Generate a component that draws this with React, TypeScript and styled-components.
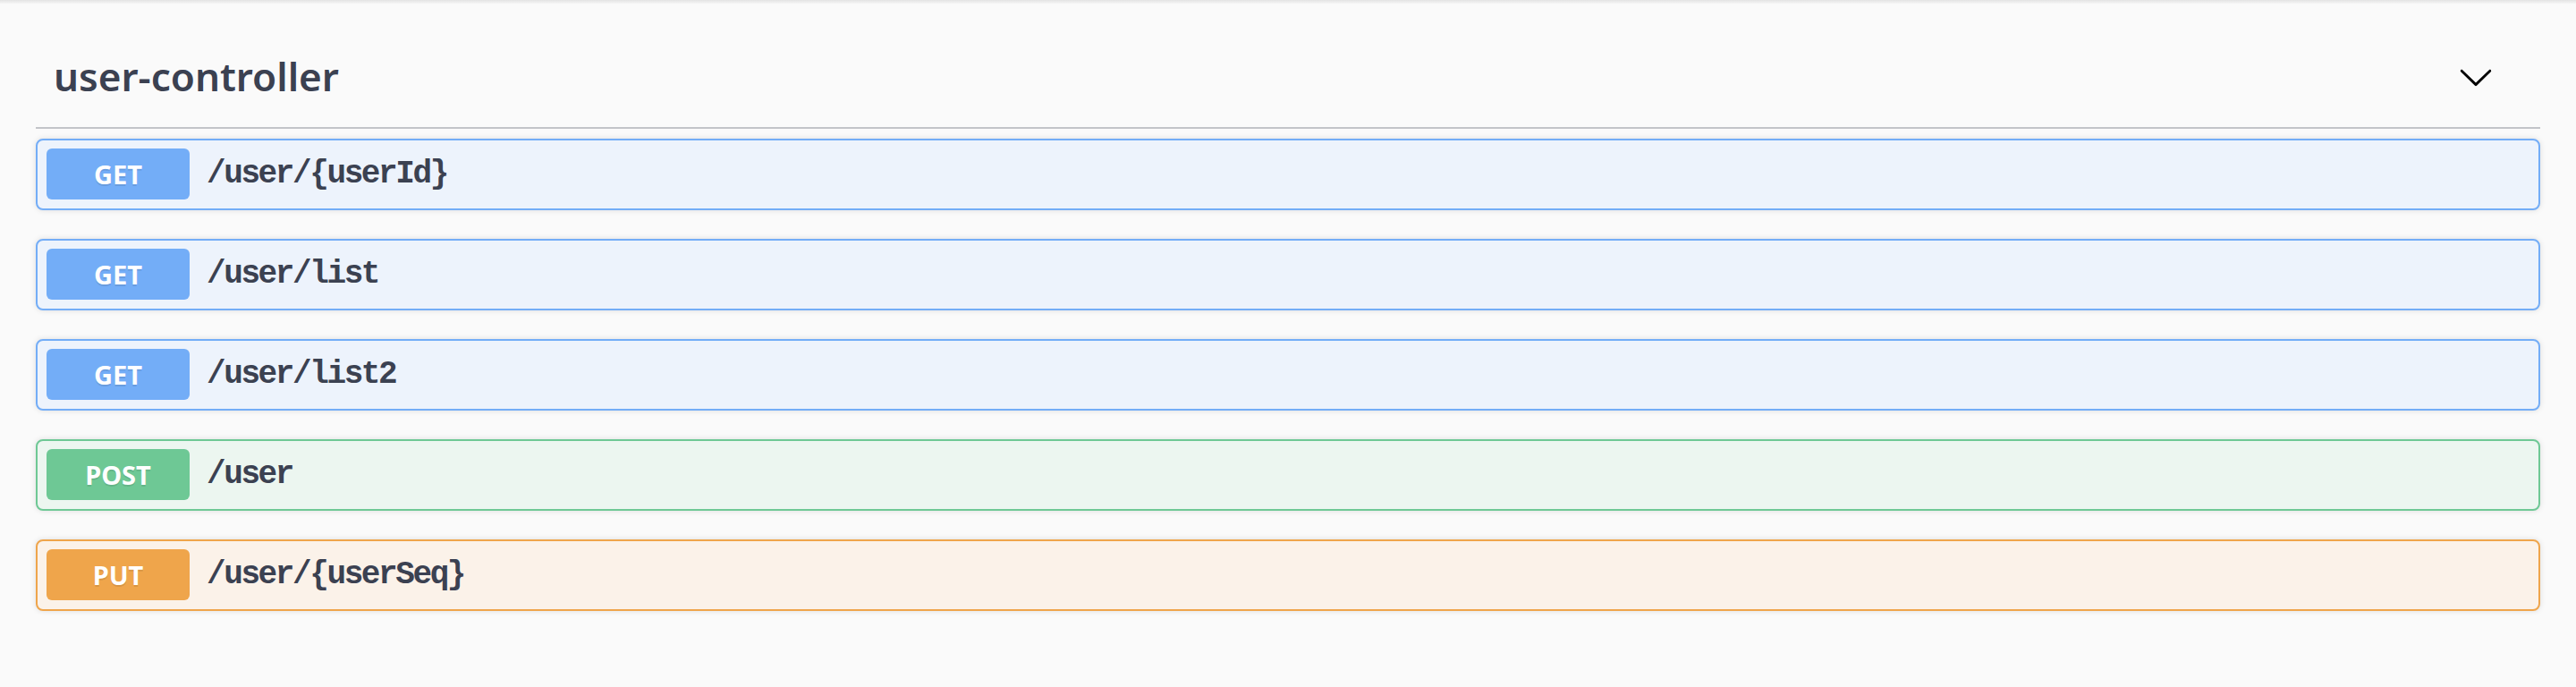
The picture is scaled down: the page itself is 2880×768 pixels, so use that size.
import styled, { createGlobalStyle } from "styled-components";

type Method = "get" | "post" | "put";

const palette: Record<Method, { main: string; bg: string }> = {
  get: { main: "#73adf7", bg: "#edf3fc" },
  post: { main: "#6ec895", bg: "#ecf6f0" },
  put: { main: "#efa54b", bg: "#fbf2e9" },
};

const operations: { method: Method; path: string }[] = [
  { method: "get", path: "/user/{userId}" },
  { method: "get", path: "/user/list" },
  { method: "get", path: "/user/list2" },
  { method: "post", path: "/user" },
  { method: "put", path: "/user/{userSeq}" },
];

const GlobalStyle = createGlobalStyle`
  html, body {
    margin: 0;
    padding: 0;
    background: #fafafa;
  }
`;

const Page = styled.div`
  min-height: 768px;
  background: #fafafa;
  font-family: "Noto Sans", sans-serif;
  color: #3b4151;
`;

const TopEdge = styled.div`
  height: 4px;
  background: linear-gradient(to bottom, #e3e3e3, #f5f5f5);
`;

const Section = styled.section`
  padding: 0 40px;
`;

const TagHeader = styled.div`
  display: flex;
  align-items: center;
  margin-top: 31px;
  padding: 20px 40px 27px 20px;
  border-bottom: 2px solid #c2c4c8;
`;

const TagTitle = styled.h4`
  flex: 1;
  margin: 0;
  font-family: "Noto Sans", sans-serif;
  font-size: 44px;
  font-weight: 600;
  line-height: 60px;
  color: #3b4151;
`;

const ExpandButton = styled.button`
  display: flex;
  align-items: center;
  border: none;
  background: none;
  padding: 0;
  margin: 2px 12px 0 0;
  cursor: pointer;
`;

const OpList = styled.div`
  display: flex;
  flex-direction: column;
  gap: 32px;
  margin-top: 11px;
`;

const OpBlock = styled.div<{ $method: Method }>`
  display: flex;
  align-items: center;
  padding: 9px 10px 10px;
  border: 2px solid ${(p) => palette[p.$method].main};
  border-radius: 8px;
  background: ${(p) => palette[p.$method].bg};
  box-shadow: 0 0 6px rgba(0, 0, 0, 0.12);
`;

const MethodBadge = styled.span<{ $method: Method }>`
  display: flex;
  align-items: center;
  justify-content: center;
  width: 160px;
  height: 57px;
  border-radius: 6px;
  background: ${(p) => palette[p.$method].main};
  color: #fff;
  font-family: "Noto Sans", sans-serif;
  font-size: 29px;
  font-weight: 700;
  text-shadow: 0 2px 0 rgba(0, 0, 0, 0.1);
`;

const PathText = styled.span`
  margin-left: 19px;
  font-family: "Liberation Mono", monospace;
  font-size: 36px;
  font-weight: 700;
  letter-spacing: -2.4px;
  color: #3b4151;
`;

function Chevron() {
  return (
    <svg width="40" height="40" viewBox="0 0 20 20" aria-hidden="true">
      <path
        fill="#000"
        d="M17.418 6.109c.272-.268.709-.268.979 0s.271.701 0 .969l-7.908 7.83c-.27.268-.707.268-.979 0l-7.908-7.83c-.27-.268-.27-.701 0-.969.271-.268.709-.268.979 0L10 13.25l7.418-7.141z"
      />
    </svg>
  );
}

export default function App() {
  return (
    <Page>
      <GlobalStyle />
      <TopEdge />
      <Section>
        <TagHeader>
          <TagTitle>user-controller</TagTitle>
          <ExpandButton aria-label="collapse">
            <Chevron />
          </ExpandButton>
        </TagHeader>
        <OpList>
          {operations.map((op) => (
            <OpBlock key={op.method + op.path} $method={op.method}>
              <MethodBadge $method={op.method}>{op.method.toUpperCase()}</MethodBadge>
              <PathText>{op.path}</PathText>
            </OpBlock>
          ))}
        </OpList>
      </Section>
    </Page>
  );
}
